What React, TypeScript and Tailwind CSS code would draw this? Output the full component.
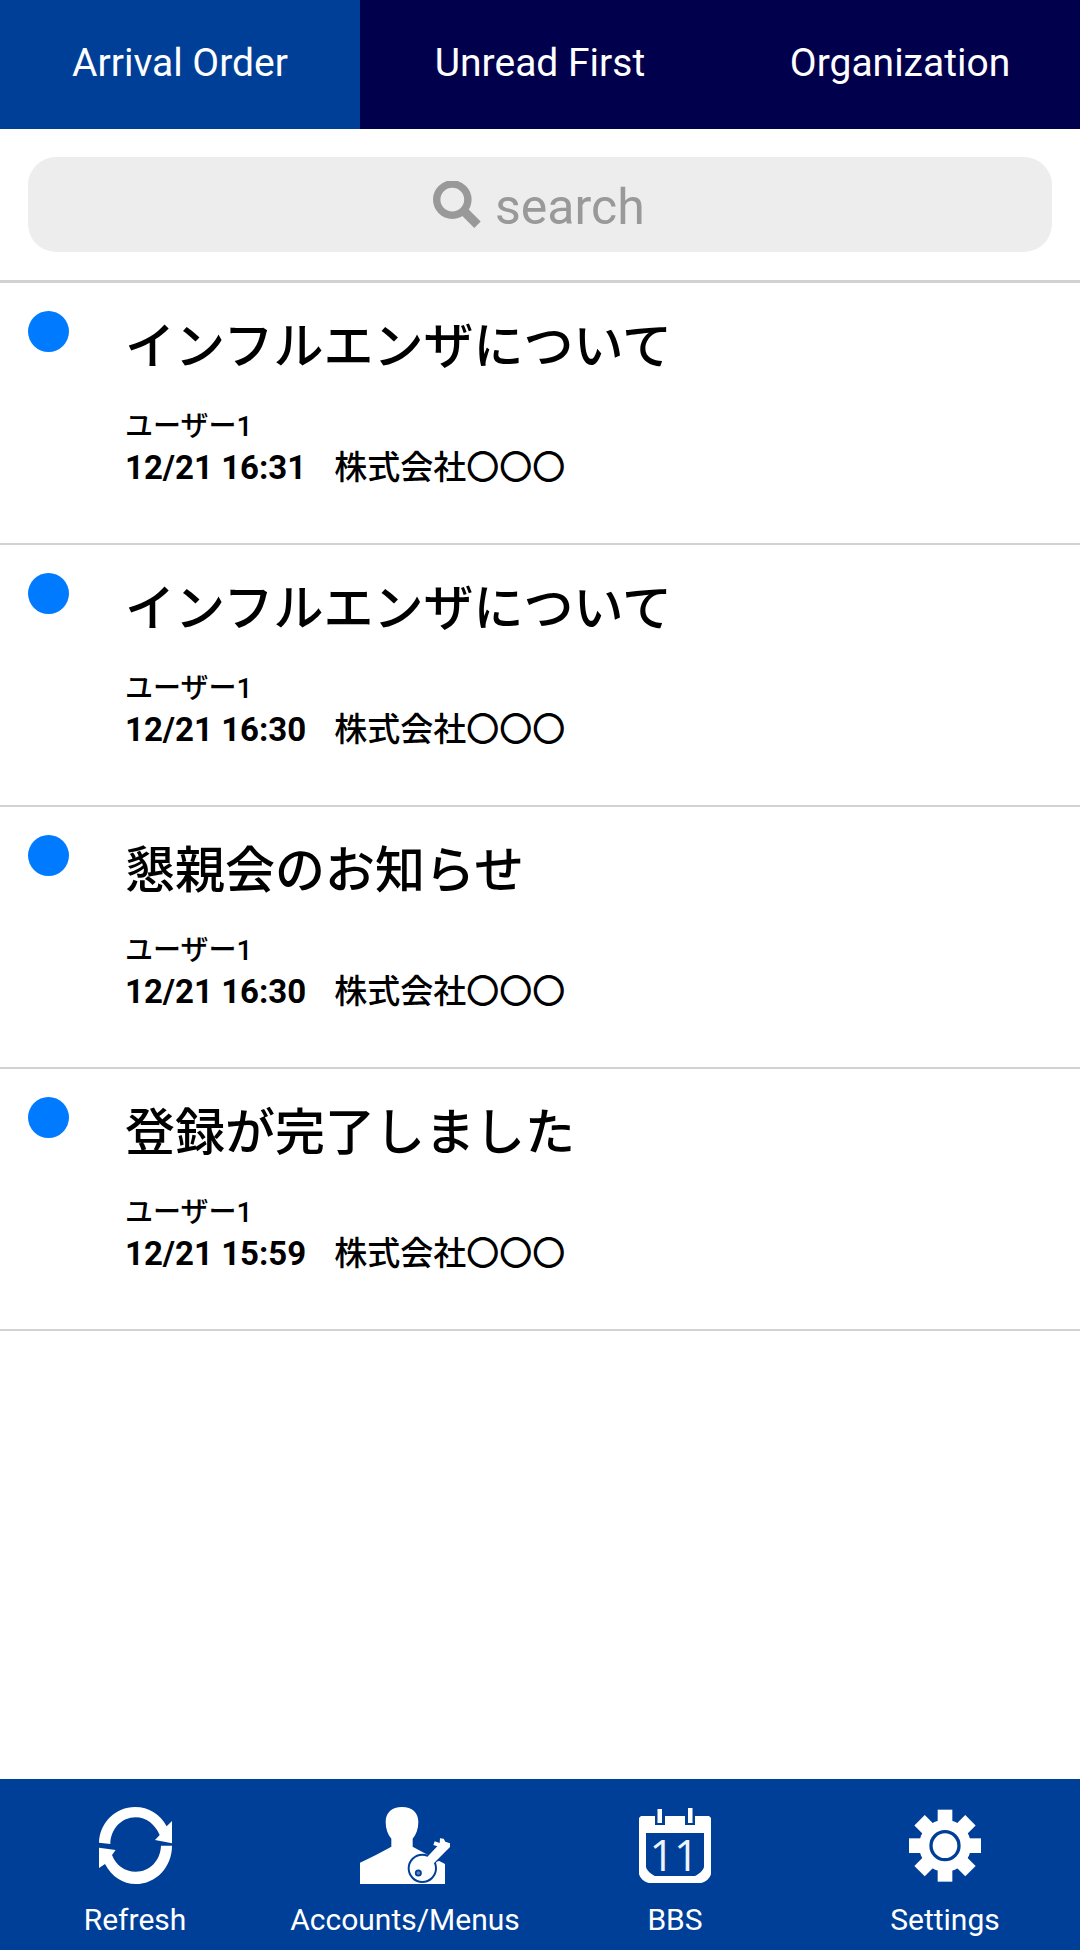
import { useState, type ReactNode } from "react";

type Message = {
  id: number;
  title: string;
  user: string;
  date: string;
  company: string;
};

const TABS = ["Arrival Order", "Unread First", "Organization"];

const MESSAGES: Message[] = [
  { id: 1, title: "インフルエンザについて", user: "ユーザー1", date: "12/21 16:31", company: "株式会社〇〇〇" },
  { id: 2, title: "インフルエンザについて", user: "ユーザー1", date: "12/21 16:30", company: "株式会社〇〇〇" },
  { id: 3, title: "懇親会のお知らせ", user: "ユーザー1", date: "12/21 16:30", company: "株式会社〇〇〇" },
  { id: 4, title: "登録が完了しました", user: "ユーザー1", date: "12/21 15:59", company: "株式会社〇〇〇" },
];

function SearchIcon() {
  return (
    <svg viewBox="0 0 48 48" className="h-12 w-12 shrink-0" fill="none" stroke="#999999" aria-hidden="true">
      <circle cx="19.3" cy="18.6" r="15.6" strokeWidth="7.4" />
      <path d="M30 29.300 44.500 43.800" strokeWidth="9" />
    </svg>
  );
}

function RefreshIcon() {
  return (
    <svg viewBox="54 36 219 231" className="h-[77px] w-[73px]" fill="#fff" aria-hidden="true">
      <path d="M54 143C56 82 104 36 162 36c42 0 76 22 95 58l16-16v67l-51-10 14-15C222 88 196 67 164 67c-42 0-75 34-76 80z" />
      <path d="M273 152c0 64-48 115-109 115-38 0-72-22-92-60l-18 12v-61l50 7-11 15c12 32 39 50 71 50 42 0 74-33 76-78z" />
    </svg>
  );
}

function AccountsIcon() {
  return (
    <svg viewBox="45 36 270 231" className="h-[77px] w-[90px]" fill="#fff" aria-hidden="true">
      <path d="M45 203c30-14 66-32 94-48v-24c-11-13-17-30-17-50 0-28 18-45 49-45s49 17 49 45c0 20-6 37-17 50v24l46 25 4 22 30-4 17 9v60H45z" />
      {/* key */}
      <path d="M240 210 309 146" stroke="#003f98" strokeWidth="34" fill="none" />
      <circle cx="232" cy="220" r="41" stroke="#003f98" strokeWidth="6" />
      <path d="M243 190l34-36-12-4 4-11 15 5 1-14 11 1 5 9 14 5v11l-56 56z" />
      <circle cx="220" cy="234" r="8" fill="#5d82bd" stroke="#003f98" strokeWidth="5" />
    </svg>
  );
}

function CalendarIcon() {
  return (
    <svg viewBox="0 0 72 77" className="h-[77px] w-[72px]" aria-hidden="true">
      <path
        fill="#fff"
        fillRule="evenodd"
        d="M2 9h14v9h10V9h20v9h10V9h14l2 2v56c-1 4-5 8-10 9H10c-5-1-9-5-10-9V11zM7 26v34c1 4 5 7 9 9h40c4-2 8-5 9-9V26z"
      />
      <path fill="#fff" d="M18.500 2h4.500v14h-4.500zM49 1h4.500v15H49z" />
      <text x="35" y="64" textAnchor="middle" fontSize="43" fill="#edf4fd" className="font-['Open_Sans',sans-serif]">
        11
      </text>
    </svg>
  );
}

function GearIcon() {
  return (
    <svg viewBox="-108 -116 216 231" className="h-[77px] w-[72px]" fill="#fff" aria-hidden="true">
      {[0, 45, 90, 135].map((angle) => (
        <rect key={angle} x="-22" y="-108" width="44" height="216" transform={`rotate(${angle})`} />
      ))}
      <circle r="78" />
      <circle r="42" fill="none" stroke="#003f98" strokeWidth="10" />
    </svg>
  );
}

const NAV_ITEMS: { label: string; icon: ReactNode }[] = [
  { label: "Refresh", icon: <RefreshIcon /> },
  { label: "Accounts/Menus", icon: <AccountsIcon /> },
  { label: "BBS", icon: <CalendarIcon /> },
  { label: "Settings", icon: <GearIcon /> },
];

export default function App() {
  const [activeTab, setActiveTab] = useState(TABS[0]);
  const [query, setQuery] = useState("");

  const messages = MESSAGES.filter((m) => m.title.includes(query));

  return (
    <div className="flex min-h-screen flex-col bg-white font-[Roboto,'Noto_Sans_CJK_JP',sans-serif] text-black">
      {/* Sort tabs */}
      <nav className="grid grid-cols-3 bg-[#00004c]">
        {TABS.map((tab) => (
          <button
            key={tab}
            onClick={() => setActiveTab(tab)}
            className={`pt-[39px] pb-[41px] text-[39px] leading-[49px] text-white ${activeTab === tab ? "bg-[#003f98]" : ""}`}
          >
            {tab}
          </button>
        ))}
      </nav>

      {/* Search */}
      <div className="border-b-3 border-[#d2d2d2] p-7">
        <label className="flex h-[95px] items-center justify-center gap-[14px] rounded-[28px] bg-[#ededed]">
          <SearchIcon />
          <input
            type="text"
            aria-label="search"
            placeholder="search"
            value={query}
            onChange={(e) => setQuery(e.target.value)}
            className="w-[152px] bg-transparent pt-1 text-[50px] leading-[60px] text-[#333333] outline-none placeholder:text-[#999999]"
          />
        </label>
      </div>

      {/* Messages */}
      <ul className="flex-1">
        {messages.map((m) => (
          <li key={m.id} className="border-b-2 border-[#d2d2d2]">
            <a href="#" className="flex gap-14 px-7 pt-7 pb-[54px]">
              <span className="h-[41px] w-[41px] shrink-0 rounded-full bg-[#007aff]" />
              <div className="min-w-0 flex-1 font-medium">
                <h2 className="text-[50px] leading-[73px]">{m.title}</h2>
                <p className="mt-[22px] text-[28px] leading-[41px]">{m.user}</p>
                <p className="flex gap-7 text-[33px] leading-[42px]">
                  <span className="font-bold">{m.date}</span>
                  <span>{m.company}</span>
                </p>
              </div>
            </a>
          </li>
        ))}
      </ul>

      {/* Bottom navigation */}
      <nav className="grid grid-cols-4 bg-[#003f98]">
        {NAV_ITEMS.map((item) => (
          <button key={item.label} className="flex flex-col items-center gap-4 pt-7 pb-[10px] text-white">
            {item.icon}
            <span className="text-[30px] leading-10">{item.label}</span>
          </button>
        ))}
      </nav>
    </div>
  );
}
